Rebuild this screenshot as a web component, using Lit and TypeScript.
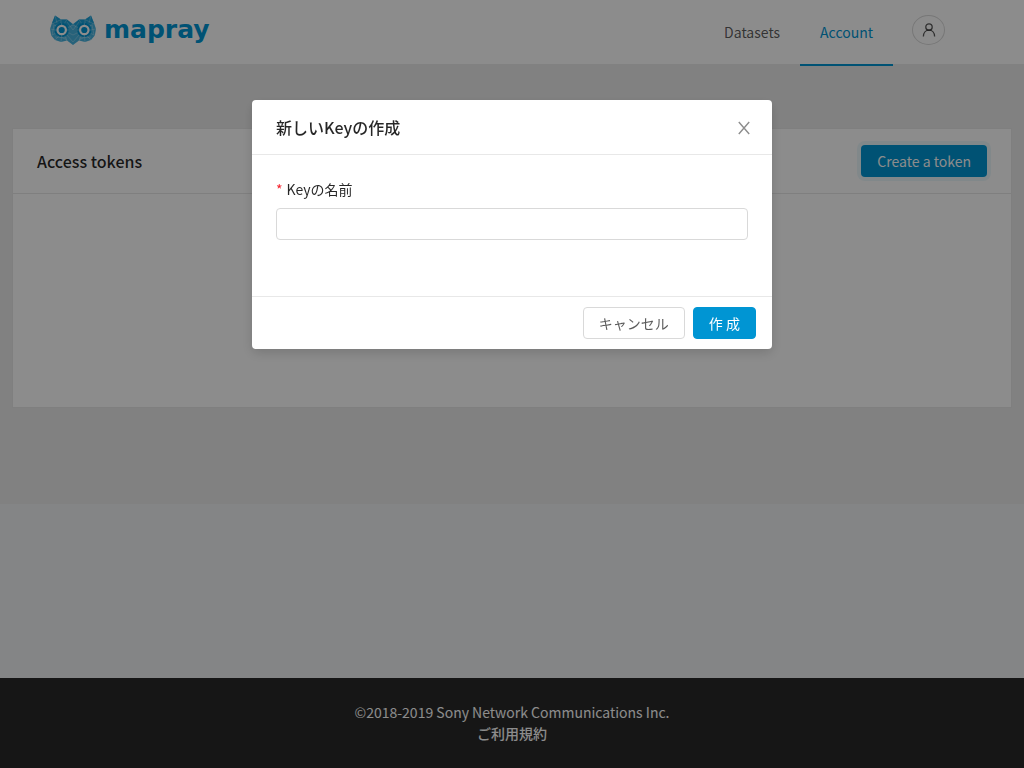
import { LitElement, html, css, svg } from "lit";
import { customElement, state } from "lit/decorators.js";

const FONT = css`"Noto Sans CJK JP", "Noto Sans", sans-serif`;

@customElement("owl-logo")
class OwlLogo extends LitElement {
  static styles = css`
    :host { display: block; }
    .link { display: flex; align-items: center; gap: 8px; color: #0095d3; text-decoration: none; }
    .owl { display: block; width: 46px; height: 30px; }
    .word { font: 700 25px/32px "DejaVu Sans", sans-serif; }
  `;

  private half() {
    return svg`
      <path d="M5 .5 11 4.600 17 4.600 23 9V30L17 25.500 11 27 5 25 1.200 20.500 0 14 2 8Z" fill="#0095d3" fill-opacity=".72"/>
      <path d="M5 .5 11 4.600 17 4.600 22 9 19 12 11 7.500 4 10 2 8Z" fill="#0095d3" fill-opacity=".6"/>
      <path d="M5 .5 7 8M11 4.600 3 8.500M17 4.600 14 9M2 8 6 11M0 14 6 15M1.200 20.500 6 18M5 25 9 21M11 27 11.500 21M17 25.500 14 20M23 10 17 13M23 20 17 17M23 27 17 20M11 4.600V9M4 10 2 20M5 22 17 23M17 7 23 15M9 21 17 25" stroke="#fff" stroke-opacity=".45" stroke-width=".6" fill="none"/>
      <circle cx="11.700" cy="15" r="7.200" fill="#0095d3"/>
      <path d="M11.700 7.800V10M11.700 20V22.200M4.500 15H6.700M16.700 15H18.900" stroke="#fff" stroke-opacity=".5" stroke-width=".7"/>
      <circle cx="11.700" cy="15" r="4.200" fill="none" stroke="#fff" stroke-width="2.200"/>`;
  }

  render() {
    return html`<a class="link" href="#">
      <svg class="owl" viewBox="0 0 46 30" aria-hidden="true">
        <g>${this.half()}</g>
        <g transform="translate(46 0) scale(-1 1)">${this.half()}</g>
      </svg>
      <span class="word">mapray</span>
    </a>`;
  }
}

@customElement("key-dialog")
class KeyDialog extends LitElement {
  static styles = css`
    :host { display: block; width: 520px; max-width: calc(100% - 16px); }
    * { box-sizing: border-box; }
    .panel { background: #fff; border-radius: 4px; box-shadow: 0 4px 12px rgba(0, 0, 0, 0.15); color: rgba(0, 0, 0, 0.85); font: 14px/21px ${FONT}; }
    .head { display: flex; align-items: center; justify-content: space-between; height: 55px; padding: 0 20px 0 24px; border-bottom: 1px solid #e8e8e8; }
    .title { margin: 0; font-size: 16px; line-height: 22px; font-weight: 500; }
    .close { display: flex; padding: 2px 0 0; border: 0; background: none; color: rgba(0, 0, 0, 0.45); cursor: pointer; }
    .body { padding: 24px 24px 56px; }
    .label { display: block; padding-bottom: 8px; }
    .star { margin-right: 4px; color: #f5222d; }
    .input { display: block; width: 100%; height: 32px; padding: 4px 11px; border: 1px solid #d9d9d9; border-radius: 4px; font: inherit; outline: none; }
    .foot { display: flex; justify-content: flex-end; gap: 8px; padding: 10px 16px; border-top: 1px solid #e8e8e8; }
    .btn { height: 32px; padding: 0 15px; border: 1px solid #d9d9d9; border-radius: 4px; background: #fff; color: rgba(0, 0, 0, 0.65); font: 14px/21px ${FONT}; cursor: pointer; }
    .primary { border-color: #0095d3; background: #0095d3; color: #fff; }
  `;

  render() {
    return html`<form class="panel" role="dialog" aria-labelledby="title" @submit=${(e: Event) => e.preventDefault()}>
      <div class="head">
        <h2 class="title" id="title">新しいKeyの作成</h2>
        <button class="close" type="button" aria-label="閉じる" @click=${this.close}>
          <svg width="16" height="16" viewBox="0 0 16 16" fill="none" stroke="currentColor" stroke-width="1.400"><path d="M2.800 2 13.200 14M13.200 2 2.800 14"/></svg>
        </button>
      </div>
      <div class="body">
        <label class="label" for="name"><span class="star">*</span>Keyの名前</label>
        <input class="input" id="name" type="text" required />
      </div>
      <div class="foot">
        <button class="btn" type="button" @click=${this.close}>キャンセル</button>
        <button class="btn primary" type="submit">作 成</button>
      </div>
    </form>`;
  }

  private close() {
    this.dispatchEvent(new CustomEvent("close"));
  }
}

@customElement("app-root")
class AppRoot extends LitElement {
  static styles = css`
    :host { display: block; font: 14px/21px ${FONT}; color: rgba(0, 0, 0, 0.65); }
    * { box-sizing: border-box; }
    .page { display: flex; flex-direction: column; min-height: 100vh; background: #f0f2f5; }
    .header { z-index: 1; display: flex; align-items: flex-start; justify-content: space-between; height: 64px; padding: 0 79px 0 50px; background: #fff; }
    .logo { padding-top: 14px; }
    .nav { display: flex; }
    .tab { height: 66px; padding: 0 20px; border-bottom: 2px solid transparent; line-height: 64px; color: inherit; text-decoration: none; }
    .active { color: #0095d3; border-color: #0095d3; }
    .user { display: flex; align-items: center; justify-content: center; width: 33px; height: 30px; margin: 15px 0 0 19px; padding: 0; border: 1px solid #d9d9d9; border-radius: 50%; background: #fff; color: inherit; }
    .main { padding: 64px 12px 96px; background: #ececec; }
    .card { min-height: 280px; border: 1px solid #e8e8e8; background: #fff; }
    .cardhead { display: flex; align-items: center; justify-content: space-between; height: 65px; padding: 0 24px; border-bottom: 1px solid #e8e8e8; }
    .cardtitle { margin: 0; color: rgba(0, 0, 0, 0.85); font-size: 16px; line-height: 24px; font-weight: 500; }
    .create { height: 32px; padding: 0 16px; border: 0; border-radius: 4px; background: #0095d3; color: #fff; font: inherit; box-shadow: 0 0 0 4px rgba(0, 149, 211, 0.08); }
    .footer { margin-top: auto; padding: 24px 50px; background: #282828; color: #fff; text-align: center; }
    .copy { margin: 0; }
    .terms { color: inherit; font-weight: 500; text-decoration: none; }
    .mask { position: fixed; inset: 0; z-index: 2; display: flex; align-items: flex-start; justify-content: center; padding-top: 100px; background: rgba(0, 0, 0, 0.45); }
  `;

  @state() private open = true;

  render() {
    return html`
      <div class="page">
        <header class="header">
          <owl-logo class="logo"></owl-logo>
          <nav class="nav">
            <a class="tab" href="#datasets">Datasets</a>
            <a class="tab active" href="#account">Account</a>
            <button class="user" aria-label="User">
              <svg width="14" height="14" viewBox="0 0 14 14" fill="none" stroke="currentColor" stroke-width="1.300"><circle cx="7" cy="4" r="3.200"/><path d="M1.400 13.500C1.400 9.800 3.800 7.200 7 7.200s5.600 2.600 5.600 6.300"/></svg>
            </button>
          </nav>
        </header>
        <main class="main">
          <section class="card">
            <div class="cardhead">
              <h1 class="cardtitle">Access tokens</h1>
              <button class="create" @click=${() => (this.open = true)}>Create a token</button>
            </div>
          </section>
        </main>
        <footer class="footer">
          <p class="copy">©2018-2019 Sony Network Communications Inc.</p>
          <a class="terms" href="#terms">ご利用規約</a>
        </footer>
      </div>
      ${this.open ? html`<div class="mask"><key-dialog @close=${() => (this.open = false)}></key-dialog></div>` : null}
    `;
  }
}
